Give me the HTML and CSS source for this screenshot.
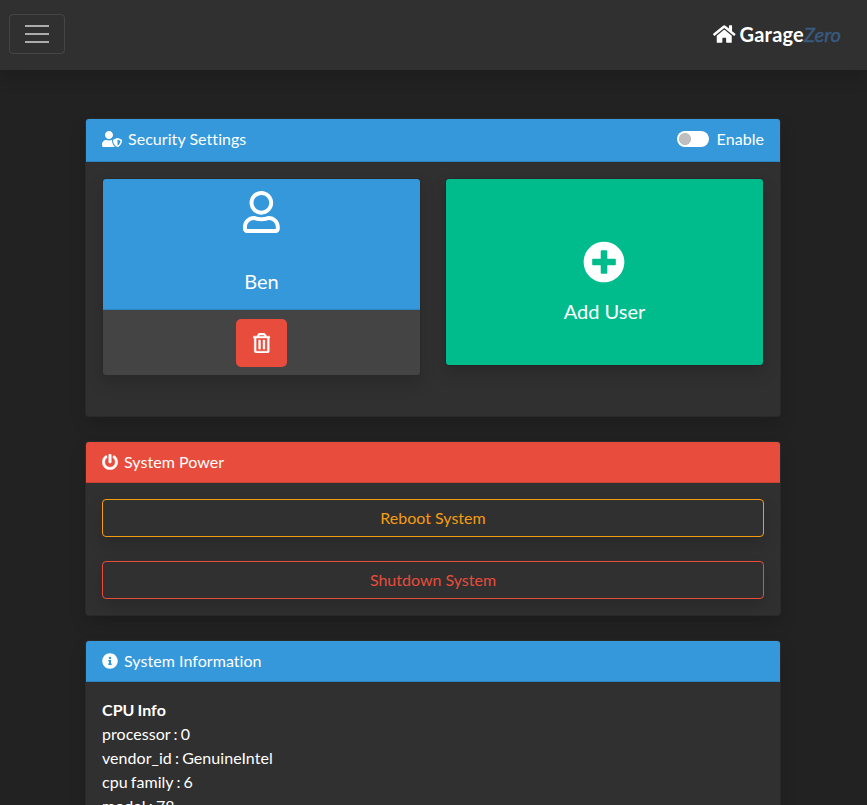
FILE: index.html
```html
<!DOCTYPE html>
<html lang="en">
<head>
<meta charset="utf-8">
<title>GarageZero</title>
<link rel="stylesheet" href="styles.css">
</head>
<body>
<nav class="navbar">
  <button class="toggler" aria-label="Menu"><svg viewBox="0 0 30 30"><path stroke="rgba(255,255,255,.6)" stroke-miterlimit="10" stroke-width="2" d="M3 7h24M3 15h24M3 23h24"/></svg></button>
  <a class="brand"><svg class="icon icon-home" viewBox="0 0 576 512"><path d="M280.37 148.26L96 300.11V464a16 16 0 0 0 16 16l112.06-.29a16 16 0 0 0 15.92-16V368a16 16 0 0 1 16-16h64a16 16 0 0 1 16 16v95.64a16 16 0 0 0 16 16.05L464 480a16 16 0 0 0 16-16V300L295.67 148.26a12.19 12.19 0 0 0-15.3 0zM571.6 251.47L488 182.56V44.05a12 12 0 0 0-12-12h-56a12 12 0 0 0-12 12v72.61L318.47 43a48 48 0 0 0-61 0L4.34 251.47a12 12 0 0 0-1.6 16.9l25.5 31A12 12 0 0 0 45.15 301l235.22-193.74a12.19 12.19 0 0 1 15.3 0L530.9 301a12 12 0 0 0 16.9-1.6l25.5-31a12 12 0 0 0-1.7-16.93z"/></svg><b>Garage</b><i>Zero</i></a>
</nav>
<main class="container">
  <section class="card">
    <header class="card-header info tall">
      <svg class="icon icon-shield" viewBox="0 0 640 512"><path d="M622.3 271.1l-115.2-45c-4.1-1.6-12.6-3.7-22.2 0l-115.2 45c-10.7 4.2-17.7 14-17.7 24.9 0 111.6 68.7 188.8 132.9 213.9 9.6 3.7 18 1.6 22.2 0C558.4 489.9 640 420.5 640 296c0-10.9-7-20.7-17.7-24.9zM496 462.4V273.3l95.5 37.3c-5.6 87.1-60.9 135.4-95.5 151.8zM224 256c70.7 0 128-57.3 128-128S294.7 0 224 0 96 57.3 96 128s57.3 128 128 128zm96 40c0-2.5.8-4.8 1.1-7.2-2.5-.1-4.9-.8-7.5-.8h-16.7c-22.2 10.2-46.9 16-72.9 16s-50.6-5.8-72.9-16h-16.7C60.2 288 0 348.2 0 422.4V464c0 26.5 21.5 48 48 48h352c6.8 0 13.3-1.5 19.2-4-54-42.9-99.2-116.7-99.2-212z"/></svg>
      <span>Security Settings</span>
      <label class="switch"><span class="track"></span>Enable</label>
    </header>
    <div class="card-body users">
      <div class="card user">
        <div class="user-top info">
          <svg class="icon icon-user" viewBox="0 0 448 512"><path d="M313.6 304c-28.7 0-42.5 16-89.6 16-47.1 0-60.8-16-89.6-16C60.2 304 0 364.2 0 438.4V464c0 26.5 21.5 48 48 48h352c26.5 0 48-21.5 48-48v-25.6c0-74.2-60.2-134.4-134.4-134.4zM400 464H48v-25.6c0-47.6 38.8-86.4 86.4-86.4 14.6 0 38.3 16 89.6 16 51.7 0 74.9-16 89.6-16 47.6 0 86.4 38.8 86.4 86.4V464zM224 288c79.5 0 144-64.5 144-144S303.5 0 224 0 80 64.5 80 144s64.5 144 144 144zm0-240c52.9 0 96 43.1 96 96s-43.1 96-96 96-96-43.1-96-96 43.1-96 96-96z"/></svg>
          <span>Ben</span>
        </div>
        <div class="user-footer">
          <button class="delete" aria-label="Delete"><svg class="icon icon-trash" viewBox="0 0 448 512"><path d="M268 416h24a12 12 0 0 0 12-12V188a12 12 0 0 0-12-12h-24a12 12 0 0 0-12 12v216a12 12 0 0 0 12 12zM432 80h-82.41l-34-56.7A48 48 0 0 0 274.41 0H173.59a48 48 0 0 0-41.16 23.3L98.41 80H16A16 16 0 0 0 0 96v16a16 16 0 0 0 16 16h16v336a48 48 0 0 0 48 48h288a48 48 0 0 0 48-48V128h16a16 16 0 0 0 16-16V96a16 16 0 0 0-16-16zM171.84 50.91A6 6 0 0 1 177 48h94a6 6 0 0 1 5.15 2.91L293.61 80H154.39zM368 464H80V128h288zm-212-48h24a12 12 0 0 0 12-12V188a12 12 0 0 0-12-12h-24a12 12 0 0 0-12 12v216a12 12 0 0 0 12 12z"/></svg></button>
        </div>
      </div>
      <div class="card add">
        <svg class="icon icon-plus" viewBox="0 0 512 512"><path d="M256 8C119 8 8 119 8 256s111 248 248 248 248-111 248-248S393 8 256 8zm144 276c0 6.6-5.4 12-12 12h-92v92c0 6.6-5.4 12-12 12h-56c-6.6 0-12-5.4-12-12v-92h-92c-6.6 0-12-5.4-12-12v-56c0-6.6 5.4-12 12-12h92v-92c0-6.6 5.4-12 12-12h56c6.6 0 12 5.4 12 12v92h92c6.6 0 12 5.4 12 12v56z"/></svg>
        <span>Add User</span>
      </div>
    </div>
  </section>

  <section class="card">
    <header class="card-header danger">
      <svg class="icon icon-power" viewBox="0 0 512 512"><path d="M400 54.1c63 45 104 118.6 104 201.9 0 136.8-110.8 247.7-247.5 248C120 504.3 8.2 393 8 256.4 7.9 173.1 48.9 99.3 111.8 54.2c11.7-8.3 28-4.8 35 7.7L162.6 90c5.9 10.5 3.1 23.8-6.6 31-41.5 30.8-68 79.6-68 134.9-.1 92.3 74.5 168.1 168 168.1 91.6 0 168.6-74.2 168-169.1-.3-51.8-24.7-101.8-68.1-134-9.7-7.2-12.4-20.5-6.5-30.9l15.8-28.1c7-12.4 23.2-16.1 34.8-7.8zM296 264V24c0-13.3-10.7-24-24-24h-32c-13.3 0-24 10.7-24 24v240c0 13.3 10.7 24 24 24h32c13.3 0 24-10.7 24-24z"/></svg>
      <span>System Power</span>
    </header>
    <div class="card-body power">
      <button class="outline warn">Reboot System</button>
      <button class="outline stop">Shutdown System</button>
    </div>
  </section>

  <section class="card">
    <header class="card-header info">
      <svg class="icon" viewBox="0 0 512 512"><path d="M256 8C119.043 8 8 119.083 8 256c0 136.997 111.043 248 248 248s248-111.003 248-248C504 119.083 392.957 8 256 8zm0 110c23.196 0 42 18.804 42 42s-18.804 42-42 42-42-18.804-42-42 18.804-42 42-42zm56 254c0 6.627-5.373 12-12 12h-88c-6.627 0-12-5.373-12-12v-24c0-6.627 5.373-12 12-12h12v-64h-12c-6.627 0-12-5.373-12-12v-24c0-6.627 5.373-12 12-12h64c6.627 0 12 5.373 12 12v100h12c6.627 0 12 5.373 12 12v24z"/></svg>
      <span>System Information</span>
    </header>
    <div class="card-body details">
      <b>CPU Info</b><br>
      processor : 0<br>
      vendor_id : GenuineIntel<br>
      cpu family : 6<br>
      model : 78
    </div>
  </section>
</main>
</body>
</html>
```
FILE: styles.css
```css
* { box-sizing: border-box; }
html { height: 100%; overflow: hidden; }
body {
  margin: 0;
  height: 100%;
  overflow: hidden;
  background: #222;
  color: #fff;
  font: 400 16px/24px Lato, sans-serif;
}
button { font: inherit; color: inherit; margin: 0; }
.icon { display: block; flex: none; width: 16px; height: 16px; fill: currentColor; }

.navbar {
  position: relative;
  display: flex;
  align-items: center;
  justify-content: space-between;
  height: 70px;
  padding: 0 26px 2px 9px;
  background: #303030;
  box-shadow: 0 8px 16px rgba(0, 0, 0, .15);
}
.toggler {
  display: flex;
  align-items: center;
  justify-content: center;
  width: 56px;
  height: 40px;
  padding: 0;
  background: none;
  border: 1px solid rgba(255, 255, 255, .1);
  border-radius: 4px;
}
.toggler svg { width: 30px; height: 30px; }
.brand { display: flex; align-items: center; font-size: 20px; line-height: 30px; }
.brand b { letter-spacing: .2px; }
.brand i { color: #375a7f; -webkit-text-stroke: .5px #375a7f; }
.icon-home { width: 22.5px; height: 20px; margin-right: 4px; }

.container { width: 696px; margin: 48px 0 0 85px; }
.card {
  margin-bottom: 24px;
  background: #303030;
  border: 1px solid rgba(0, 0, 0, .125);
  border-radius: 4px;
  box-shadow: 0 8px 16px rgba(0, 0, 0, .15);
}
.card-header {
  display: flex;
  align-items: center;
  gap: 6px;
  height: 41px;
  padding: 0 16px;
  border-bottom: 1px solid rgba(0, 0, 0, .125);
  border-radius: 3px 3px 0 0;
  letter-spacing: .05px;
}
.tall { height: 43px; padding-bottom: 2px; }
.info { background: #3498db; }
.danger { background: #e74c3c; }
.icon-shield { width: 20px; }
.icon-power { stroke: currentColor; stroke-width: 14px; }
.switch { display: flex; align-items: center; gap: 8px; margin-left: auto; }
.track {
  width: 32px;
  height: 16px;
  border-radius: 8px;
  background: radial-gradient(circle at 8px 8px, #bfbfbf 5.7px, #fff 6.3px);
}
.card-body { padding: 16px; }
.details { word-spacing: -1px; letter-spacing: .05px; }
.users {
  display: grid;
  grid-template-columns: 1fr 1fr;
  align-items: start;
  gap: 24px;
}
.user-top {
  display: flex;
  flex-direction: column;
  align-items: center;
  height: 131px;
  padding-top: 12px;
  border-bottom: 1px solid rgba(0, 0, 0, .125);
  border-radius: 3px 3px 0 0;
  font-size: 20px;
}
.user-top span { margin-top: 36px; }
.icon-user { width: 36.75px; height: 42px; }
.user-footer {
  display: flex;
  justify-content: center;
  height: 65px;
  padding-top: 9px;
  background: #444;
  border-radius: 0 0 3px 3px;
}
.delete {
  display: flex;
  align-items: center;
  justify-content: center;
  width: 51px;
  height: 48px;
  padding: 0;
  background: #e74c3c;
  border: 0;
  border-radius: 5px;
}
.icon-trash { width: 17.5px; height: 20px; stroke: currentColor; stroke-width: 10px; }
.add {
  display: flex;
  flex-direction: column;
  align-items: center;
  height: 188px;
  padding-top: 62px;
  background: #00bc8c;
  background-clip: padding-box;
  font-size: 20px;
}
.icon-plus { width: 42px; height: 42px; margin: 0 1px 16px 0; }
.power { display: grid; gap: 24px; }
.outline {
  height: 38px;
  background: none;
  border: 1px solid;
  border-radius: 4px;
  box-shadow: 0 8px 16px rgba(0, 0, 0, .15);
}
.warn { color: #f39c12; }
.stop { color: #e74c3c; }
```
